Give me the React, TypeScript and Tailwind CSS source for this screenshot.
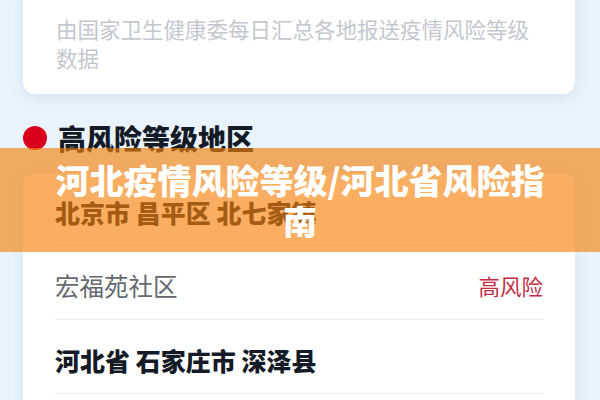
export default function App() {
  return (
    <div className="relative w-[600px] h-[400px] overflow-hidden bg-[#e9f3fb] font-['Noto_Sans_CJK_SC','Noto_Sans',sans-serif]">
      <div className="pl-[23px] pr-[25px]">
        <div className="-mt-[20px] rounded-[12px] bg-white pt-[34px] pb-[22px] px-[33px] shadow-[0_3px_14px_rgba(120,160,200,0.18)]">
          <p className="text-[21.5px] leading-[29px] text-[#c4c8ce]">
            由国家卫生健康委每日汇总各地报送疫情风险等级数据
          </p>
        </div>
        <div className="mt-[28px] flex items-center gap-[11px] h-[32px]">
          <span className="w-[24px] h-[24px] rounded-full bg-[#d9001b] shrink-0" />
          <h2 className="text-[28px] leading-[32px] font-black text-[#141a26]">高风险等级地区</h2>
        </div>
        <div className="mt-[19px] rounded-[12px] bg-white px-[32px] shadow-[0_3px_14px_rgba(120,160,200,0.18)]">
          <div className="h-[73px] flex items-center pt-[6px] border-b-[1.5px] border-[#ececec]">
            <span className="text-[25px] leading-[30px] font-black text-[#141a26]">北京市 昌平区 北七家镇</span>
          </div>
          <div className="h-[74px] flex items-center justify-between pt-[6px] border-b-[1.5px] border-[#ececec]">
            <span className="text-[24.5px] leading-[30px] text-[#666a70]">宏福苑社区</span>
            <span className="text-[21.5px] leading-[30px] text-[#c22d46]">高风险</span>
          </div>
          <div className="h-[74px] flex items-center pt-[6px] border-b-[1.5px] border-[#ececec]">
            <span className="text-[25px] leading-[30px] font-black text-[#141a26]">河北省 石家庄市 深泽县</span>
          </div>
          <div className="h-[40px]" />
        </div>
      </div>
      <div className="absolute left-0 right-0 top-[148px] h-[104px] bg-[rgba(246,128,10,0.64)] flex items-center justify-center px-[50px]">
        <p className="text-center text-[34px] leading-[41px] font-black text-white">
          河北疫情风险等级/河北省风险指南
        </p>
      </div>
    </div>
  );
}
